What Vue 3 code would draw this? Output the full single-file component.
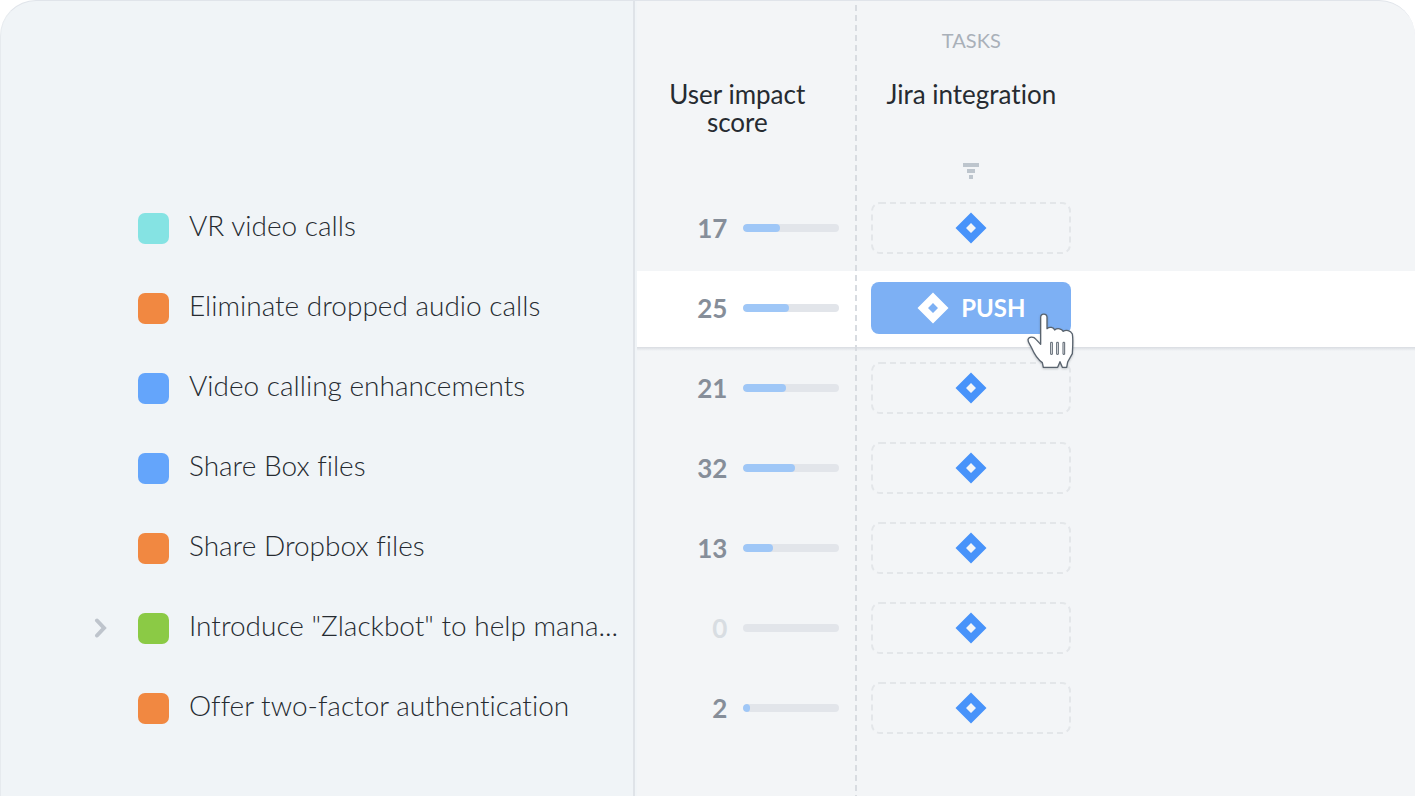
<script setup>
const features = [
  { name: 'VR video calls', color: '#85e3e3', score: 17, fill: 38 },
  { name: 'Eliminate dropped audio calls', color: '#f18841', score: 25, fill: 48, active: true },
  { name: 'Video calling enhancements', color: '#64a5fb', score: 21, fill: 44 },
  { name: 'Share Box files', color: '#64a5fb', score: 32, fill: 54 },
  { name: 'Share Dropbox files', color: '#f18841', score: 13, fill: 31 },
  { name: 'Introduce "Zlackbot" to help mana...', color: '#8bca45', score: 0, fill: 0, expandable: true },
  { name: 'Offer two-factor authentication', color: '#f18841', score: 2, fill: 7 },
]
</script>

<template>
  <main class="board">
    <table class="grid">
      <thead>
        <tr>
          <th class="name-col" aria-label="Feature"></th>
          <th class="score-col" scope="col">
            <div class="head">
              <span class="group"></span>
              <span class="title">User impact score</span>
            </div>
          </th>
          <th class="task-col" scope="col">
            <div class="head">
              <span class="group">TASKS</span>
              <span class="title">Jira integration</span>
              <button class="filter" type="button" aria-label="Filter">
                <svg width="16" height="16" viewBox="0 0 16 16">
                  <path d="M0 0h16v4H0zM4 6h8v4H4zM6 12h4v4H6z" fill="#bdc5cd" />
                </svg>
              </button>
            </div>
          </th>
        </tr>
      </thead>
      <tbody>
        <tr v-for="f in features" :key="f.name" :class="{ active: f.active }">
          <th class="name-col" scope="row">
            <div class="feature">
              <span class="slot">
                <button v-if="f.expandable" class="expand" type="button" aria-label="Expand">
                  <svg width="16" height="20" viewBox="0 0 16 20">
                    <path d="M5 2.500L12 10L5 17.500" fill="none" stroke="#bec4cc" stroke-width="4" stroke-linecap="round" stroke-linejoin="miter" />
                  </svg>
                </button>
              </span>
              <span class="swatch" :style="{ background: f.color }"></span>
              <span class="name">{{ f.name }}</span>
            </div>
          </th>
          <td class="score-col">
            <div class="score">
              <span class="value" :class="{ zero: f.score === 0 }">{{ f.score }}</span>
              <span class="bar"><span class="fill" :style="{ width: f.fill + '%' }"></span></span>
            </div>
          </td>
          <td class="task-col">
            <button class="task" :class="{ push: f.active }" type="button" :aria-label="f.active ? null : 'Push to Jira'">
              <svg v-if="!f.active" class="outline" viewBox="0 0 200 52">
                <rect x="1" y="1" width="198" height="50" rx="8" fill="none" stroke="#e3e6e9" stroke-width="2" stroke-dasharray="6 4" />
              </svg>
              <svg class="jira" width="32" height="32" viewBox="0 0 32 32">
                <path d="M16 0.500L31.500 16L16 31.500L0.500 16ZM16 11L11 16L16 21L21 16Z" fill="currentColor" fill-rule="evenodd" />
              </svg>
              <span v-if="f.active">PUSH</span>
              <svg v-if="f.active" class="hand" width="60" height="70" viewBox="0 0 180 210">
                <path d="M62 40C62 27 81 27 81 40V74C89 67 101 70 104 78C112 71 126 74 129 82C139 76 151 79 157 90C160 108 158 128 157 149L143 174L140 190H127L120 173L113 190H70L67 176C52 166 43 151 34 130C31 122 24 116 24 107C27 97 41 97 48 106L62 121Z" fill="#fff" stroke="#59636e" stroke-width="4" stroke-linejoin="round" />
                <path d="M92 115h5v36h-5zM110 115h5v36h-5zM129 115h5v36h-5z" fill="#fff" stroke="#59636e" stroke-width="3" />
              </svg>
            </button>
          </td>
        </tr>
      </tbody>
    </table>
  </main>
</template>

<style>
body {
  background: #fff;
}
</style>

<style scoped>
.board {
  box-sizing: border-box;
  min-height: 100vh;
  overflow: hidden;
  border-top: 1px solid #e0e4ea;
  border-left: 1px solid #e6eaee;
  border-radius: 36px 36px 0 0;
  background:
    linear-gradient(#dfe3e8, #dfe3e8) no-repeat calc(45% - 3px) 0 / 2px 100%,
    linear-gradient(to right, #f0f4f7 45%, #f3f5f7 45%);
  color: #262b31;
  font-family: Lato, "Liberation Sans", sans-serif;
  font-variant-ligatures: none;
}
.grid {
  width: 100%;
  table-layout: fixed;
  border-collapse: collapse;
}
th,
td {
  padding: 0;
  font-weight: 400;
  text-align: left;
}
.name-col {
  width: 45%;
}
.score-col {
  width: 220px;
}
thead .score-col {
  position: relative;
}
thead .score-col::after {
  content: "";
  position: absolute;
  top: 4px;
  right: 0;
  width: 2px;
  height: 100vh;
  background: repeating-linear-gradient(#d8dce1 0 6px, transparent 6px 10px);
}
thead th {
  height: 190px;
  vertical-align: top;
}
.head {
  box-sizing: border-box;
  display: flex;
  flex-direction: column;
  align-items: center;
  width: 200px;
  height: 190px;
  padding-top: 27px;
  text-align: center;
}
.task-col .head {
  margin-left: 14px;
}
.group {
  height: 24px;
  margin-bottom: 28px;
  color: #a9b0b9;
  font-size: 20px;
  line-height: 24px;
}
.title {
  width: 180px;
  font-size: 26px;
  line-height: 28px;
}
.filter {
  display: flex;
  margin-top: 55px;
  padding: 0;
  border: 0;
  background: none;
}
tbody th,
tbody td {
  height: 74px;
  padding-bottom: 6px;
}
.active td {
  background:
    linear-gradient(#fff, #fff) no-repeat 0 0 / 100% 76px,
    linear-gradient(#d9dce1, #f3f5f7) no-repeat 0 76px / 100% 4px;
}
.feature {
  display: flex;
  align-items: center;
  padding-left: 91px;
}
.slot {
  flex: none;
  width: 46px;
}
.expand {
  display: flex;
  padding: 0;
  border: 0;
  background: none;
}
.swatch {
  flex: none;
  width: 31px;
  height: 31px;
  margin-right: 20px;
  border-radius: 7px;
}
.name {
  padding-bottom: 6px;
  overflow: hidden;
  font-size: 28px;
  font-weight: 300;
  line-height: 36px;
  white-space: nowrap;
}
.score {
  display: flex;
  align-items: center;
  justify-content: flex-end;
  gap: 16px;
  padding-right: 18px;
}
.value {
  color: #868e99;
  font-size: 26px;
  font-weight: 700;
  line-height: 32px;
}
.zero {
  color: #d8dde2;
}
.bar {
  width: 96px;
  height: 8px;
  overflow: hidden;
  border-radius: 4px;
  background: #e2e5ea;
}
.fill {
  display: block;
  height: 8px;
  border-radius: 4px;
  background: #9fc7f7;
}
.task {
  position: relative;
  display: flex;
  align-items: center;
  justify-content: center;
  gap: 12px;
  width: 200px;
  height: 52px;
  margin-left: 14px;
  padding: 0;
  border: 0;
  border-radius: 8px;
  background: none;
  color: #4893fa;
  font-family: inherit;
  font-size: 24px;
  font-weight: 700;
  line-height: 32px;
}
.push {
  background: #7db0f4;
  color: #fff;
}
.outline {
  position: absolute;
  inset: 0;
}
.jira {
  display: block;
}
.hand {
  position: absolute;
  top: 22px;
  left: 149px;
  z-index: 1;
  filter: drop-shadow(0 1px 1px rgba(60, 70, 80, 0.3));
}
</style>
